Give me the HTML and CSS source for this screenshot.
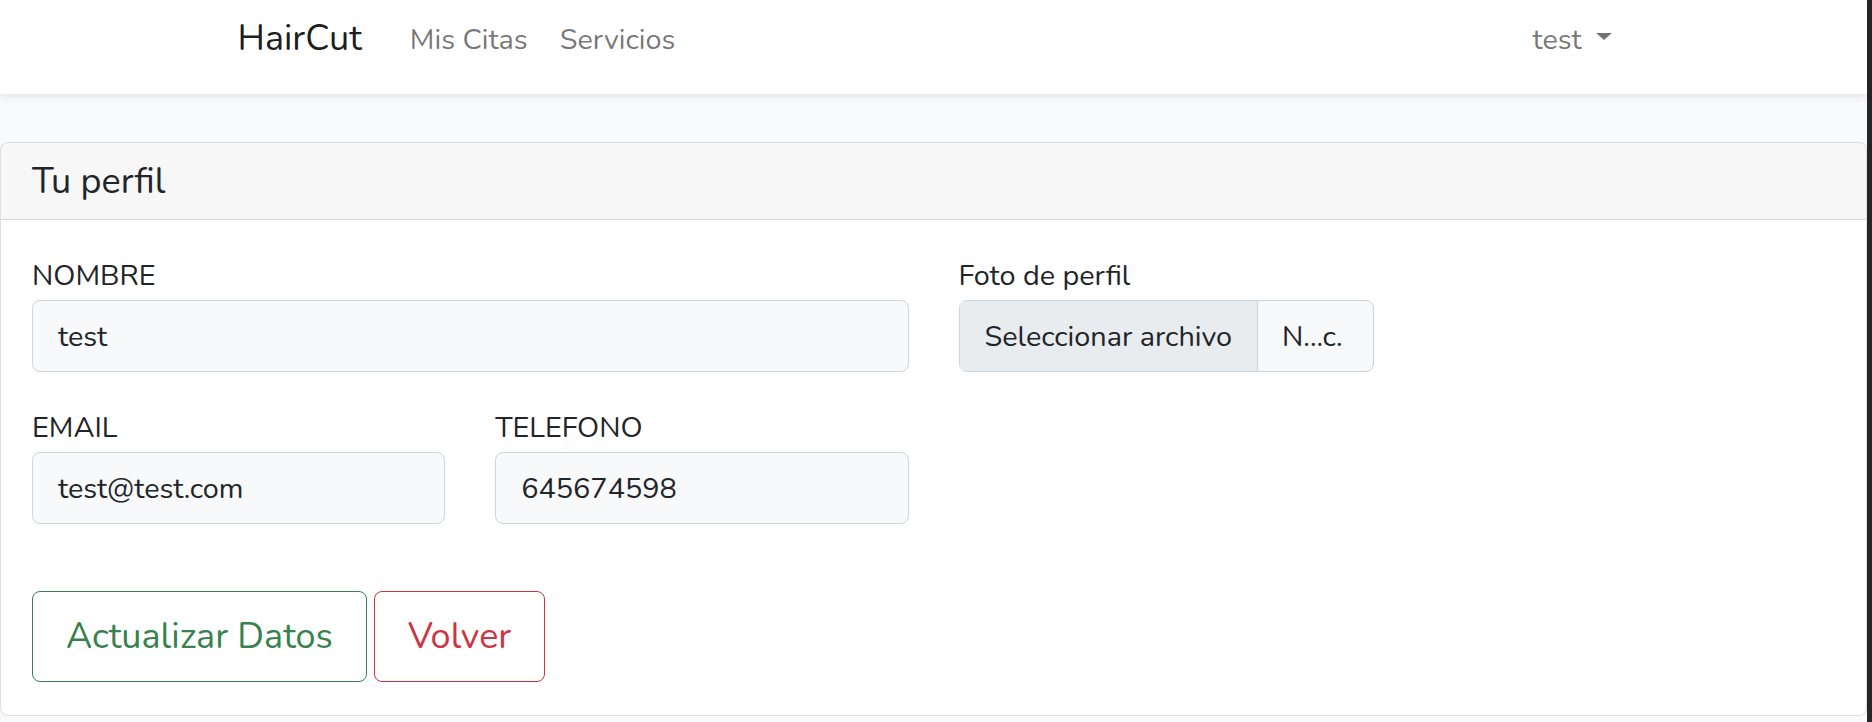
FILE: index.html
```html
<!DOCTYPE html>
<html lang="es">
<head>
<meta charset="utf-8">
<title>HairCut - Tu perfil</title>
<link rel="stylesheet" href="styles.css">
</head>
<body>
<div class="screen">
  <div class="app">
    <nav class="navbar">
      <div class="nav-inner">
        <a class="brand" href="#">HairCut</a>
        <ul class="nav-links">
          <li><a class="nav-link" href="#">Mis Citas</a></li>
          <li><a class="nav-link" href="#">Servicios</a></li>
        </ul>
        <div class="nav-right">
          <a class="nav-link user" href="#">test<span class="caret"></span></a>
        </div>
      </div>
    </nav>
    <main class="main">
      <section class="card">
        <div class="card-header">Tu perfil</div>
        <div class="card-body">
          <form class="form-grid">
            <div class="col-left">
              <div class="field">
                <label class="label">NOMBRE</label>
                <div class="input">test</div>
              </div>
              <div class="pair">
                <div class="field">
                  <label class="label">EMAIL</label>
                  <div class="input">test@test.com</div>
                </div>
                <div class="field">
                  <label class="label">TELEFONO</label>
                  <div class="input">645674598</div>
                </div>
              </div>
            </div>
            <div class="col-right">
              <div class="field">
                <label class="label">Foto de perfil</label>
                <div class="file">
                  <span class="file-btn">Seleccionar archivo</span>
                  <span class="file-name">N...c.</span>
                </div>
              </div>
            </div>
            <div class="actions">
              <button type="button" class="btn btn-success">Actualizar Datos</button>
              <button type="button" class="btn btn-danger">Volver</button>
            </div>
          </form>
        </div>
      </section>
    </main>
  </div>
  <div class="edge"></div>
</div>
</body>
</html>
```
FILE: styles.css
```css
* { box-sizing: border-box; }

html, body {
  margin: 0;
  padding: 0;
  height: 100%;
}

body {
  font-family: "Nunito", "Lato", sans-serif;
  color: #212529;
  background: #f8fafc;
  overflow: hidden;
}

a { text-decoration: none; }

.screen {
  display: flex;
  height: 722px;
}

.app {
  flex: 1;
  background: #f8fafc;
  min-width: 0;
}

.edge {
  width: 5px;
  background: #252525;
}

/* Navbar */
.navbar {
  height: 94px;
  background: #fff;
  box-shadow: 0 4px 8px rgba(0, 0, 0, 0.075);
  position: relative;
  z-index: 1;
}

.nav-inner {
  width: 1392px;
  margin: 0 auto;
  display: flex;
  align-items: baseline;
  padding-top: 21px;
}

.brand {
  font-size: 36px;
  line-height: 1;
  color: rgba(0, 0, 0, 0.9);
  margin-right: 32px;
}

.nav-links {
  list-style: none;
  margin: 0;
  padding: 0;
  display: flex;
  align-items: baseline;
}

.nav-link {
  display: block;
  font-size: 28.8px;
  line-height: 1;
  padding: 0 16px;
  color: rgba(0, 0, 0, 0.55);
}

.nav-links .nav-link {
  position: relative;
  top: -1px;
}

.nav-right {
  margin-left: auto;
}

.user {
  position: relative;
  top: -1px;
  padding-right: 18px;
}

.caret {
  display: inline-block;
  margin-left: 14px;
  vertical-align: 9px;
  border-top: 7px solid rgba(0, 0, 0, 0.55);
  border-left: 8px solid transparent;
  border-right: 8px solid transparent;
}

/* Card */
.main {
  padding-top: 48px;
}

.card {
  background: #fff;
  border: 1px solid rgba(0, 0, 0, 0.125);
  border-radius: 8px;
  overflow: hidden;
}

.card-header {
  height: 77px;
  display: flex;
  align-items: center;
  padding: 0 31px;
  font-size: 36px;
  background: rgba(0, 0, 0, 0.03);
  border-bottom: 1px solid rgba(0, 0, 0, 0.125);
}

.card-body {
  padding: 33px 31px 33px;
}

.form-grid {
  display: grid;
  grid-template-columns: 1fr 1fr;
  column-gap: 50px;
}

.pair {
  display: grid;
  grid-template-columns: 1fr 1fr;
  column-gap: 50px;
}

.field {
  margin-bottom: 33px;
}

.pair .field {
  margin-bottom: 0;
}

.col-right .field {
  margin-bottom: 0;
}

.label {
  display: block;
  font-size: 28.8px;
  line-height: 46px;
  margin-bottom: 1px;
}

.input {
  height: 72px;
  display: flex;
  align-items: center;
  padding: 0 25px;
  font-size: 28.8px;
  background: #f8f9fa;
  border: 1px solid #ced4da;
  border-radius: 8px;
}

.file {
  width: 415px;
  height: 72px;
  display: flex;
  font-size: 28.8px;
  background: #f8f9fa;
  border: 1px solid #ced4da;
  border-radius: 8px;
  overflow: hidden;
}

.file-btn {
  display: flex;
  align-items: center;
  padding: 0 25px;
  background: #e9ecef;
  border-right: 1px solid #ced4da;
  white-space: nowrap;
}

.file-name {
  display: flex;
  align-items: center;
  padding: 0 24px;
}

.actions {
  grid-column: 1 / -1;
  display: flex;
  gap: 7px;
  margin-top: 67px;
}

.btn {
  height: 91px;
  padding: 0 33px;
  font-family: inherit;
  font-size: 36px;
  background: transparent;
  border: 1px solid;
  border-radius: 8px;
  cursor: pointer;
}

.btn-success {
  color: #38824f;
  border-color: #38824f;
}

.btn-danger {
  color: #cc3541;
  border-color: #cc3541;
}
```
